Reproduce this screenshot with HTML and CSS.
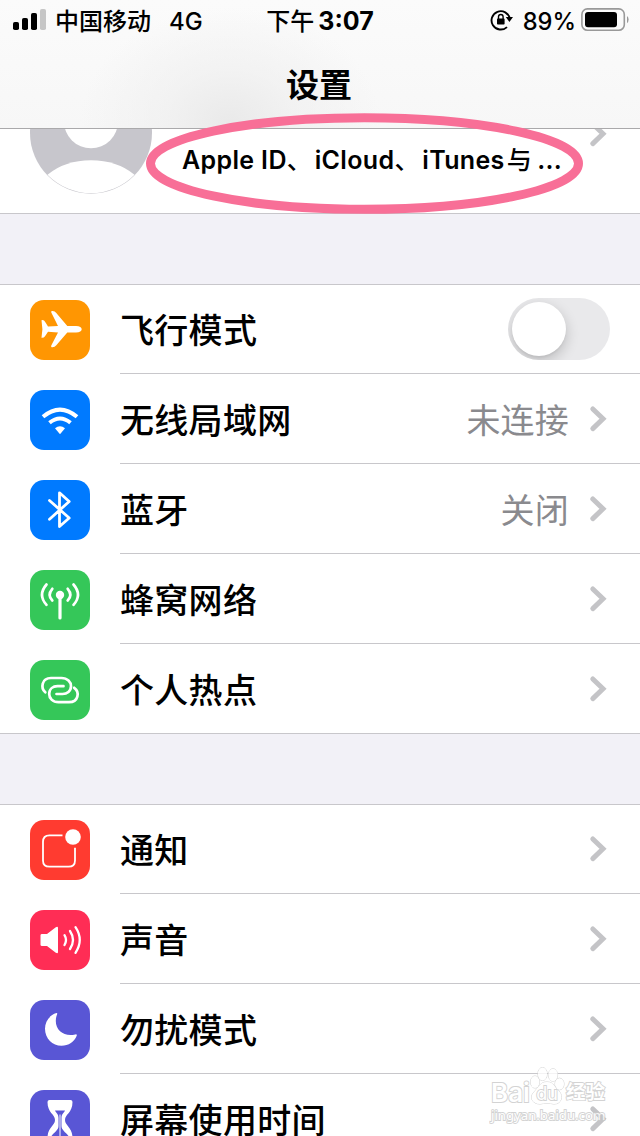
FILE: index.html
```html
<!DOCTYPE html>
<html lang="zh-CN">
<head>
<meta charset="utf-8">
<title>设置</title>
<link rel="stylesheet" href="styles.css">
</head>
<body>
<svg class="defs" width="0" height="0">
  <symbol id="chevron" viewBox="0 0 18 28"><path d="M3.8 4 L14 13.8 L3.8 23.6" fill="none" stroke="#c4c4c7" stroke-width="5" stroke-linecap="round" stroke-linejoin="miter"/></symbol>
</svg>
<div class="screen">
  <header class="header">
    <div class="status">
      <div class="status-left">
        <svg class="signal" width="34" height="22" viewBox="0 0 34 22">
          <rect x="0" y="13" width="6" height="8" rx="1.8"/><rect x="9" y="9" width="6" height="12" rx="1.8"/><rect x="18" y="4" width="6" height="17" rx="1.8"/><rect x="27" y="0" width="6" height="21" rx="1.8" fill="#c6c6c6"/>
        </svg>
        <span class="carrier">中国移动</span><span class="network">4G</span>
      </div>
      <div class="status-time"><span class="ampm">下午</span><span class="clock">3:07</span></div>
      <div class="status-right">
        <svg class="lock" width="24" height="24" viewBox="0 0 24 24">
          <path d="M19.8 10.2 A9.2 9.2 0 1 0 17 18.6" transform="translate(0 .5)" fill="none" stroke="#000" stroke-width="1.9"/>
          <path d="M15.8 9 H23 L19.4 14Z"/>
          <rect x="7" y="10.6" width="7.6" height="6" rx=".8"/>
          <path d="M8.5 11 V8.8 a2.3 2.3 0 0 1 4.6 0 V11" fill="none" stroke="#000" stroke-width="1.4"/>
        </svg>
        <span class="percent">89%</span>
        <svg class="battery" width="48" height="24" viewBox="0 0 48 24">
          <rect x=".9" y=".9" width="42.4" height="21.4" rx="5.5" fill="none" stroke="#999" stroke-width="1.6"/>
          <rect x="4" y="4" width="32" height="15.3" rx="3"/>
          <path d="M46 8 q1.6 1 1.6 3.6 t-1.6 3.6z" fill="#999"/>
        </svg>
      </div>
    </div>
    <h1 class="title">设置</h1>
  </header>

  <section class="profile">
    <svg class="avatar" width="122" height="66" viewBox="0 0 122 66">
      <circle cx="61" cy="3.7" r="61" fill="#c7c6cc"/>
      <circle cx="61" cy="-7.7" r="27" fill="#fff"/>
      <path d="M17.5 45.7 Q35 31.2 61 31.2 T104.5 45.7 A60.5 60.5 0 0 1 17.5 45.7Z" fill="#fff"/>
    </svg>
    <p class="account">Apple ID<span class="comma">、</span>iCloud<span class="comma">、</span>iTunes<span class="and">与</span><span class="dots"> ...</span></p>
    <svg class="chevron chevron-top" width="18" height="28"><use href="#chevron"/></svg>
  </section>
  <svg class="highlight" width="440" height="104" viewBox="0 0 440 104"><ellipse cx="219.5" cy="51.5" rx="214" ry="45.8" fill="none" stroke="#f86f97" stroke-width="9"/></svg>

  <section class="group">
    <div class="row">
      <svg class="icon orange" viewBox="0 0 60 60"><path fill="#fff" d="M11.5 20.2 Q14 19.6 15.2 22 L18 26.4 L28 26 L21.4 12.8 Q20.3 10.8 22.5 11 Q25 11 26.3 13 L37.3 25.9 H46 Q51.7 26.2 51.7 29.2 Q51.7 32.2 46 32.6 H37.3 L26.3 45.3 Q24.7 47.3 22.5 47.3 Q20.4 47.3 21.5 45 L28 32.6 L18 31.8 L15 36.3 Q13.9 38 11.5 37.8 L12.4 29.2Z"/></svg>
      <div class="body"><span class="label">飞行模式</span><span class="switch"><span class="knob"></span></span></div>
    </div>
    <div class="row">
      <svg class="icon blue" viewBox="0 0 60 60"><g fill="none" stroke="#fff" stroke-width="4"><path d="M13 26.8 Q30 12.4 47 26.8"/><path d="M19.5 32.7 Q30 24.2 40.5 32.7"/></g><path d="M25 38.3 Q30 34 35 38.3 L30 44.2Z" fill="#fff"/></svg>
      <div class="body"><span class="label">无线局域网</span><span class="value">未连接</span><svg class="chevron" width="18" height="28"><use href="#chevron"/></svg></div>
    </div>
    <div class="row">
      <svg class="icon blue" viewBox="0 0 60 60"><path d="M19.5 20.5 L39.2 38 L29.5 46.5 V12.8 L39.2 21.5 L19.5 39.2" fill="none" stroke="#fff" stroke-width="2.8" stroke-linecap="round" stroke-linejoin="round"/></svg>
      <div class="body"><span class="label">蓝牙</span><span class="value">关闭</span><svg class="chevron" width="18" height="28"><use href="#chevron"/></svg></div>
    </div>
    <div class="row">
      <svg class="icon green" viewBox="0 0 60 60"><circle cx="30" cy="25" r="4.2" fill="#fff"/><g fill="none" stroke="#fff" stroke-width="2.7" stroke-linecap="round"><path stroke-width="3.2" d="M30 26 V48"/><path d="M22.3 18.8 Q17 25 22.3 30.5"/><path d="M37.7 18.8 Q43 25 37.7 30.5"/><path d="M16.5 14.5 Q7.5 25 16.5 34.8"/><path d="M43.5 14.5 Q52.5 25 43.5 34.8"/></g></svg>
      <div class="body"><span class="label">蜂窝网络</span><svg class="chevron" width="18" height="28"><use href="#chevron"/></svg></div>
    </div>
    <div class="row last">
      <svg class="icon green" viewBox="0 0 60 60"><g fill="none" stroke="#fff" stroke-width="2.7" stroke-linecap="round"><path d="M15.3 32.3 C10.5 28 11.5 18 21 18 H31.5 C37.5 18 41 22 41 26.2 C41 31 37 34 32.5 34 H26.5"/><path d="M44.2 27.8 C50 32 48.5 42.2 39 42.2 H28.5 C22.5 42.2 19.2 38 19.2 34 C19.2 29 23 26.2 27.5 26.2 H33.5"/></g></svg>
      <div class="body"><span class="label">个人热点</span><svg class="chevron" width="18" height="28"><use href="#chevron"/></svg></div>
    </div>
  </section>

  <section class="group">
    <div class="row">
      <svg class="icon red" viewBox="0 0 60 60"><path d="M32.5 15.3 H19.5 Q13 15.3 13 21.8 V40.5 Q13 46.7 19.5 46.7 H38.5 Q45 46.7 45 40.5 V27.8" fill="none" stroke="#fff" stroke-width="1.8"/><circle cx="43" cy="17" r="7.8" fill="#fff"/></svg>
      <div class="body"><span class="label">通知</span><svg class="chevron" width="18" height="28"><use href="#chevron"/></svg></div>
    </div>
    <div class="row">
      <svg class="icon pink" viewBox="0 0 60 60"><path d="M10.5 25.2 Q10.5 24 12 24 H17 L25.8 17.2 Q28 16 28 18 V42 Q28 44 25.8 42.8 L17 36 H12 Q10.5 36 10.5 34.8Z" fill="#fff"/><g fill="none" stroke="#fff" stroke-width="2.3" stroke-linecap="round"><path d="M34.5 25.2 Q37.5 30 34.5 35"/><path d="M40 21 Q46 30 40 39"/><path d="M45.5 17.2 Q54 30 45.5 42.8"/></g></svg>
      <div class="body"><span class="label">声音</span><svg class="chevron" width="18" height="28"><use href="#chevron"/></svg></div>
    </div>
    <div class="row">
      <svg class="icon purple" viewBox="0 0 60 60"><path d="M26.5 13.1 C19 15.3 15 22 15 28.8 C15 38.5 22.5 45.8 31.5 45.8 C38.5 45.8 44.5 42 46.8 35.5 Q47 33.8 45.2 34.4 C35 37 25.8 31 25.8 21 C25.8 18 26.4 16 27.2 14 Q27.5 13 26.5 13.1Z" fill="#fff"/></svg>
      <div class="body"><span class="label">勿扰模式</span><svg class="chevron" width="18" height="28"><use href="#chevron"/></svg></div>
    </div>
    <div class="row">
      <svg class="icon purple" viewBox="0 0 60 60"><path d="M19.5 10 H40.5 Q42.5 10 42.5 12 C42.5 23 35 24 35 30 C35 36 42.5 37 42.5 48 Q42.5 50 40.5 50 H19.5 Q17.5 50 17.5 48 C17.5 37 25 36 25 30 C25 24 17.5 23 17.5 12 Q17.5 10 19.5 10Z" fill="#fff"/><path d="M25 20.5 H35 C33.8 23 31.5 24 31.5 28 V36 C31.5 40 35.5 42 38.5 46 H21.5 C24.5 42 28.5 40 28.5 36 V28 C28.5 24 26.2 23 25 20.5Z" fill="#5956d5"/><path d="M30 24.5 V46" stroke="#fff" stroke-width="1"/></svg>
      <div class="body"><span class="label">屏幕使用时间</span><svg class="chevron" width="18" height="28"><use href="#chevron"/></svg></div>
    </div>
  </section>

  <div class="watermark">
    <div class="mark-top"><span class="bai">Bai</span><span class="paw"><svg width="36" height="40" viewBox="0 0 36 40" fill="#fff" stroke="#c9c9c9" stroke-width="1"><ellipse cx="6" cy="16" rx="4.5" ry="6"/><ellipse cx="13.5" cy="8" rx="4.6" ry="6.5"/><ellipse cx="24" cy="9" rx="4.6" ry="6.2"/><ellipse cx="30.5" cy="18" rx="4.5" ry="5.8"/><path d="M18 16 C25 16 25 21 30 25 C35 31 32 38 25 38 C20 37 16 37 11 38 C3 38 0 31 5 26 C10 21 11 16 18 16Z"/></svg><span class="du">du</span></span><span class="jy">经验</span></div>
    <div class="mark-url">jingyan.baidu.com</div>
  </div>
</div>
</body>
</html>
```
FILE: styles.css
```css
* { box-sizing: border-box; }
body { margin: 0; background: #f2f1f7; color: #000; font-family: Inter, "Noto Sans CJK SC", sans-serif; }
.defs { position: absolute; }
.screen { position: relative; width: 640px; height: 1136px; overflow: hidden; }
.header {
  height: 129px;
  border-bottom: 1px solid #aaa9ab;
  background: radial-gradient(ellipse 150px 115px at 230px 122px, rgba(232,232,232,.9), rgba(238,238,238,.6) 45%, rgba(248,248,248,0)), linear-gradient(#fbfbfb, #f7f7f7);
}
.status { display: grid; grid-template-columns: 1fr auto 1fr; height: 40px; align-items: center; font-size: 24px; font-weight: 500; line-height: 40px; }
.status-left { display: flex; align-items: center; padding-left: 13px; }
.signal { margin-right: 8px; }
.carrier { padding-top: 3px; font-size: 24px; line-height: 37px; }
.network { margin-left: 18px; padding-top: 3px; font-size: 24px; line-height: 37px; }
.status-time { display: flex; gap: 4px; padding-top: 3px; line-height: 37px; }
.clock { font-size: 25px; font-weight: 700; }
.status-right { display: flex; align-items: center; justify-content: flex-end; padding-right: 11px; }
.lock { margin-right: 9px; }
.percent { padding-top: 3px; font-size: 23.7px; line-height: 37px; }
.battery { margin-left: 5px; }
.title { margin: 0; padding-top: 21px; padding-right: 2px; text-align: center; font-size: 33px; line-height: 48px; font-weight: 600; }
.profile { display: flex; height: 85px; padding: 0 33px 0 30px; background: #fff; border-bottom: 1px solid #c8c7cb; align-items: flex-start; overflow: hidden; }
.account { flex: 1; margin: 0 0 0 30px; padding-top: 12px; font-size: 25px; line-height: 38px; font-weight: 600; letter-spacing: .35px; white-space: nowrap; }
.comma { font-weight: 500; margin-right: 2.5px; }
.and { font-weight: 500; margin-left: 2px; }
.dots { margin-left: -1.5px; }
.highlight { position: absolute; left: 145px; top: 112px; }
.group { margin-top: 70px; background: #fff; border-top: 1px solid #c8c7cb; }
.row { display: flex; height: 90px; padding-left: 30px; align-items: flex-start; }
.row:first-child { height: 89px; }
.row:first-child .icon { margin-top: 15px; }
.icon { flex: none; width: 60px; height: 60px; margin: 16px 30px 0 0; border-radius: 14px; }
.body { flex: 1; height: 100%; display: flex; align-items: center; border-bottom: 1px solid #c8c7cb; padding-right: 33px; }
.row:first-child .body { padding-bottom: 1px; }
.last { border-bottom: 1px solid #c8c7cb; }
.last .body { border-bottom: 0; padding-bottom: 0; }
.label { flex: 1; padding-top: 4px; font-size: 34px; line-height: 32px; font-weight: 500; letter-spacing: .3px; }
.value { margin-right: 20px; padding-top: 4px; color: #8a8a8e; font-size: 34px; line-height: 32px; letter-spacing: .2px; }
.chevron { flex: none; }
.chevron-top { margin-top: -9px; }
.orange { background: #ff9602; }
.blue { background: #007aff; }
.green { background: #35c759; }
.red { background: #ff3b30; }
.pink { background: #ff2d55; }
.purple { background: #5956d5; }
.switch { width: 102px; height: 62px; margin-right: -3px; padding: 4px; border-radius: 31px; background: #e9e9eb; overflow: hidden; }
.knob { display: block; width: 54px; height: 54px; border-radius: 50%; background: #fff; box-shadow: 0 5px 14px rgba(0,0,0,.2), 0 2px 2px rgba(0,0,0,.04); }
.watermark { position: absolute; left: 491px; top: 1066px; width: 130px; color: #fff; -webkit-text-stroke: 1.8px #c9c9c9; paint-order: stroke fill; opacity: .8; }
.mark-top { display: flex; height: 40px; align-items: flex-end; }
.bai { width: 38px; font-size: 26px; line-height: 27px; font-weight: 600; }
.paw { display: grid; height: 40px; }
.paw > * { grid-area: 1 / 1; }
.du { position: relative; align-self: end; text-align: center; font-size: 18px; line-height: 24px; }
.jy { margin-left: 1px; font-size: 19.5px; line-height: 27px; font-weight: 700; }
.mark-url { padding-top: 1px; font-size: 13.2px; line-height: 16px; font-family: "Noto Sans", sans-serif; }
```
